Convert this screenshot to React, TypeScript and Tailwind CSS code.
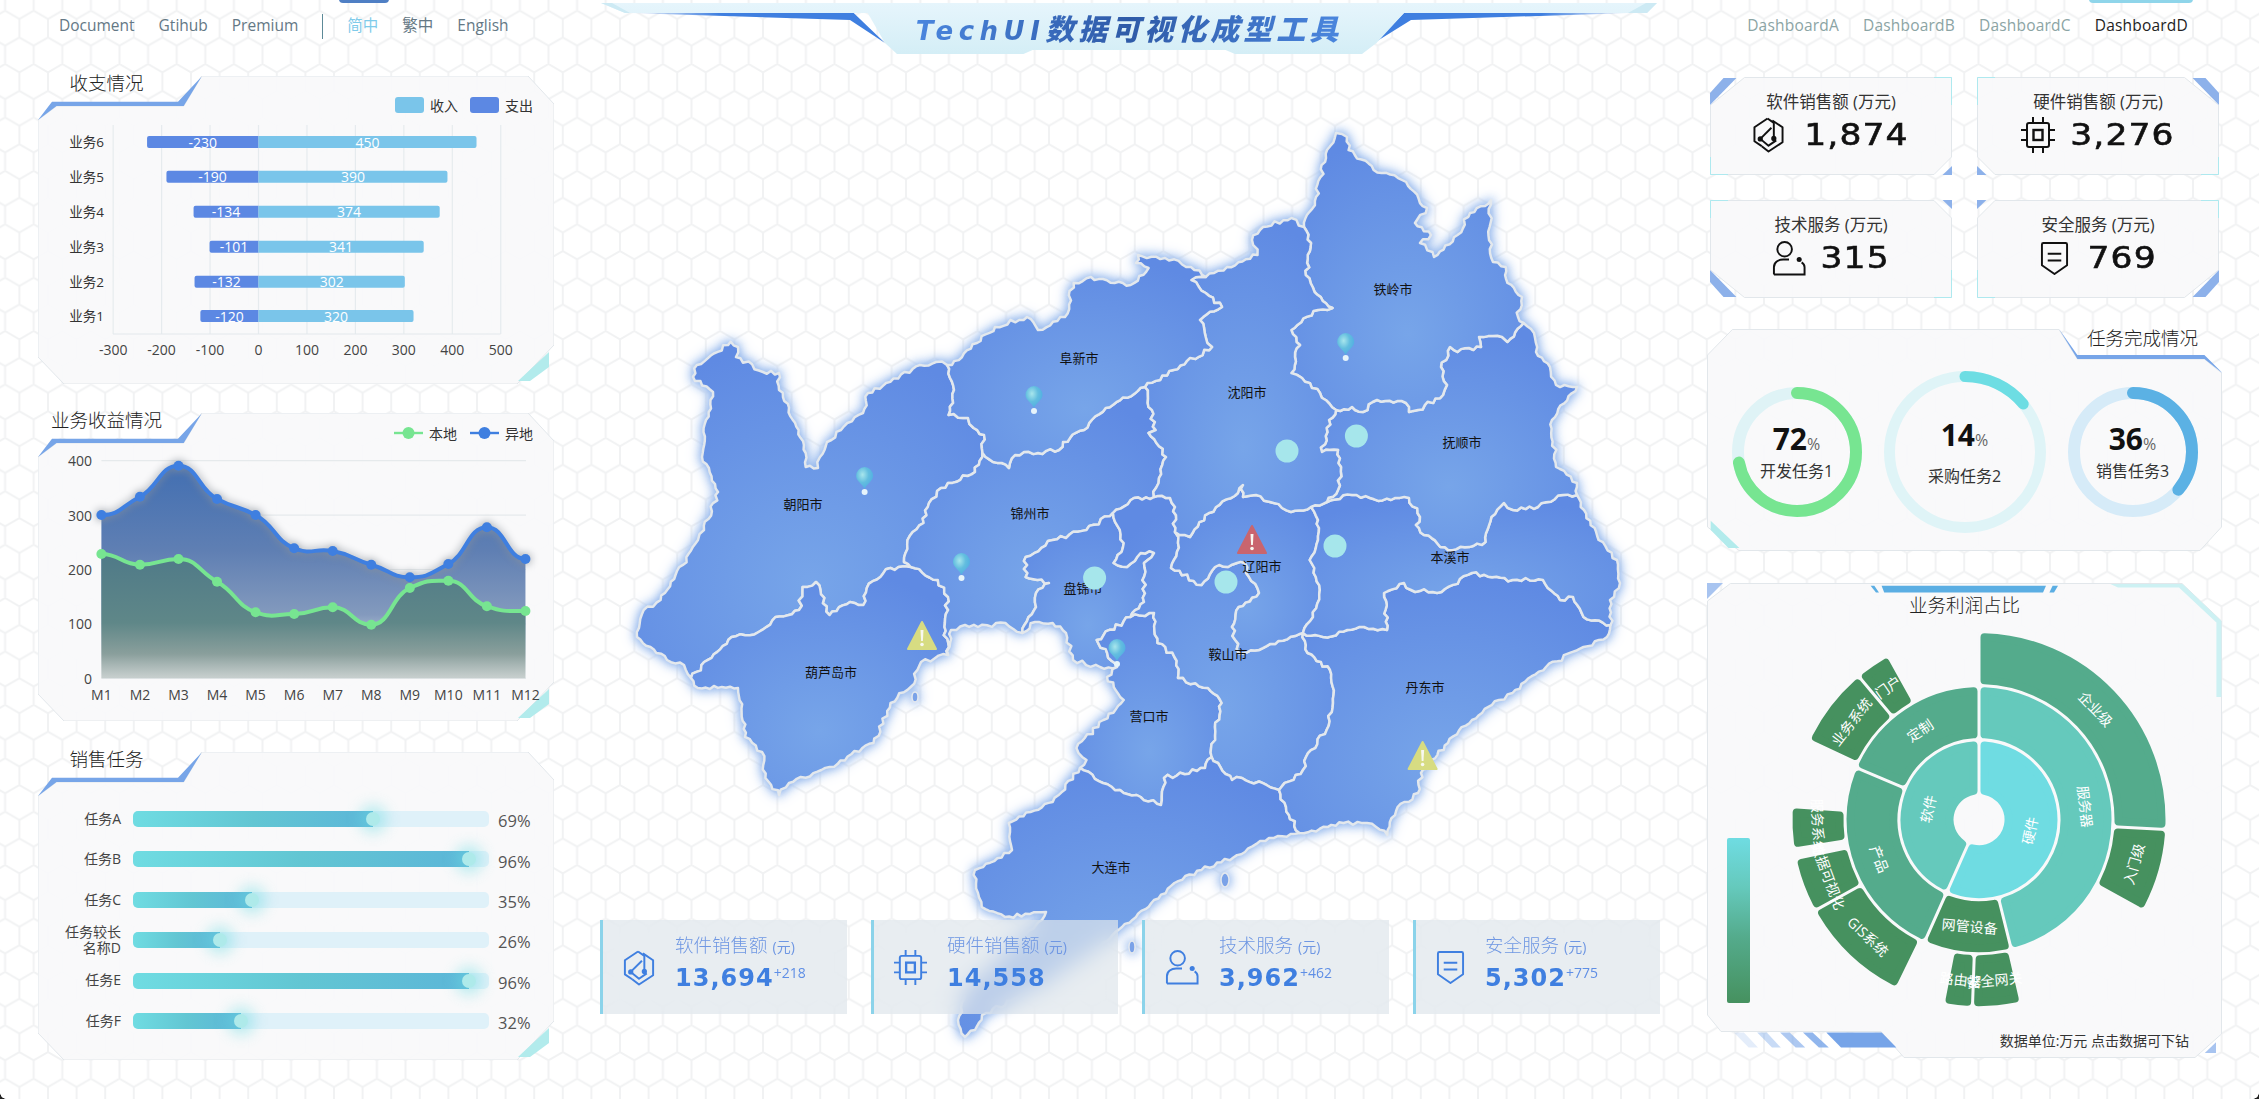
import React from "react";

type P = [number, number];
const rev = (a: P[]) => [...a].reverse();

/* ---------- map geometry, in page coordinates ---------- */
const chaoFuxin: P[] = [[947,365],[954,390],[948.6,415],[968,418],[973.6,428],[984,435],[982.5,453]];
const chaoJin: P[] = [[982.5,453],[975,472],[941,488],[929,503],[923.6,523],[907.5,540],[904,562],[910.7,567]];
const chaoHulu: P[] = [[691,678],[731.6,637],[758.6,632],[775.5,617],[799,610],[802.6,587],[816,582],[829.6,615],[850,602],[863.4,605],[866.8,588],[890.5,568],[910.7,567]];
const chaoOuter: P[] = [[947,365],[936,362],[920,365],[886,383],[868,393],[863,413],[841,430],[827,442],[820,457],[818,468],[805.7,467],[805.7,453],[798.6,430],[779,390],[779,373],[763,372],[736,357],[738,347],[730.7,341.7],[696.8,365],[693,376.7],[713,392],[706,420],[702,457],[718,492],[704,530],[698,540],[660.6,600],[643.7,610],[637,637],[667,660],[684,665],[691,678]];
const huluJin: P[] = [[910.7,567],[937.8,580],[948,597],[944.5,627],[948,655]];
const huluCoast: P[] = [[948,655],[921,662],[910.7,687],[890.5,703],[873.5,743],[829.6,767],[789,783],[779,795],[765.4,778],[762,752],[745,737],[738,688],[697.8,688],[691,678]];
const fuxinJin: P[] = [[982.5,453],[993,462],[1009,468],[1015,455],[1038,453],[1059,450],[1063,442],[1084,430],[1105.7,408],[1145,387]];
const jinShen: P[] = [[1145,387],[1155.7,430],[1148.6,433],[1166,457],[1159,478],[1154,497]];
const anJin: P[] = [[1154,497],[1134,498],[1113,513]];
const jinPan: P[] = [[1113,513],[1086.5,530],[1052.7,540],[1025.7,557],[1025.7,577],[1049,583],[1036,593],[1036,607],[1022.3,633]];
const jinCoast: P[] = [[1022.3,633],[1005.4,623],[978,627],[965,625],[951,630],[948,655]];
const anPan: P[] = [[1113,513],[1123.7,543],[1113.6,563],[1127,567],[1140.6,553],[1154,553],[1144,563],[1144,602],[1130.5,617]];
const panYing: P[] = [[1130.5,617],[1096.7,640],[1117,667]];
const panCoast: P[] = [[1117,667],[1100,667],[1073,660],[1066,633],[1052.7,623],[1035,622],[1022.3,633]];
const anYing: P[] = [[1130.5,617],[1154,613],[1157.5,643],[1174.4,657],[1178,678],[1208,688],[1221.7,703],[1215,727],[1211.6,757]];
const yingDa: P[] = [[1211.6,757],[1205,768],[1164,778],[1161,805],[1140.6,797],[1123.7,793],[1103,783],[1080,768]];
const yingCoast: P[] = [[1080,768],[1086.5,760],[1076.4,748],[1103.4,720],[1123.7,700],[1107,677],[1117,667]];
const shenAn: P[] = [[1154,497],[1170,498],[1175,507],[1175,532]];
const shenLiao: P[] = [[1175,532],[1190,537],[1209,513],[1238,493],[1243,485],[1243,497],[1256,495],[1273.6,503],[1291,512],[1311,507]];
const liaoBen: P[] = [[1311,507],[1318,520],[1318,540],[1309.7,560],[1319.8,590],[1313,617],[1303,633]];
const anLiao: P[] = [[1175,532],[1178,543],[1171,568],[1201.5,585],[1215,567],[1245,563],[1249,577],[1259,593],[1238.7,607],[1232,627],[1238.7,653],[1259,650],[1303,633]];
const anDan: P[] = [[1303,633],[1307.6,653],[1330,670],[1333,703],[1326.6,730],[1306,757],[1303,770],[1279,790]];
const anDa: P[] = [[1279,790],[1242,778],[1232,780],[1211.6,757]];
const daDan: P[] = [[1279,790],[1286,807],[1299.5,833]];
const daCoast: P[] = [[1299.5,833],[1269,838],[1245,852],[1201.5,870],[1174.4,883],[1154,900],[1122,927],[1100,945],[1040,985],[986,1013],[975,1030],[965,1037],[958,1020],[965,990],[1000,960],[1042,920],[1046,912],[1005,917],[981.7,907],[978,893],[975,870],[1012,850],[1008.8,823],[1052.7,802],[1080,768]];
const danCoast: P[] = [[1299.5,833],[1343.5,823],[1367,823],[1387.4,835],[1397.6,807],[1418,793],[1421,773],[1448,743],[1472,720],[1499,700],[1512.5,693],[1546,667],[1583.5,647],[1607,637],[1610.5,625]];
const danBen: P[] = [[1303,633],[1323,637],[1364,627],[1387,630],[1384,593],[1404,583],[1411,590],[1441.5,592],[1472,573],[1512.5,580],[1543,580],[1560,600],[1573,597],[1583.5,617],[1610.5,625]];
const benTop: P[] = [[1311,507],[1327,502]];
const fuBen: P[] = [[1327,502],[1352,495],[1370,498],[1391,500],[1409,498],[1420,517],[1416,525],[1424,535],[1448,550],[1485.5,542],[1491.4,517],[1504,503],[1513,510],[1538,507],[1563,495],[1577,495]];
const benOuter: P[] = [[1577,495],[1584,510],[1598.6,540],[1617,560],[1620,583],[1610,600],[1610.5,625]];
const tieFu: P[] = [[1336,410],[1352,407],[1363,412],[1377,400],[1406,403],[1409,412],[1418,410],[1443,395],[1447,385],[1441,367],[1450,347],[1457.5,352],[1481,347],[1479,337],[1502,337],[1507.5,342],[1523.6,323]];
const fuOuter: P[] = [[1523.6,323],[1534,333],[1536,352],[1550,367],[1556,385],[1577,387],[1552,420],[1556,467],[1577,483],[1577,495]];
const shenFu: P[] = [[1327,502],[1338,490],[1341,467],[1338,450],[1322,452],[1329,420],[1336,410]];
const tieOuter: P[] = [[1304,227],[1316,197],[1327,150],[1336,133],[1347,137],[1348.6,150],[1373.6,170],[1402,180],[1427,208],[1415,223],[1431,235],[1420,243],[1432.5,252],[1434,257],[1457.5,235],[1470,213],[1491,200],[1489.6,227],[1493,262],[1505.7,267],[1507.5,283],[1522,297],[1518,317],[1523.6,323]];
const tieShen: P[] = [[1336,410],[1320,393],[1302,378],[1291.4,373],[1295,357],[1300,345],[1291.4,330],[1318,310],[1332.5,308],[1314.6,292],[1305.7,275],[1311,243],[1304,227]];
const shenOuter: P[] = [[1205.7,277],[1227,267],[1257.5,255],[1252,240],[1263,227],[1291.4,218],[1304,227]];
const fuShen: P[] = [[1145,387],[1173.6,370],[1212,347],[1205.7,337],[1200,320],[1222,307],[1205.7,293],[1191.4,280],[1205.7,277]];
const fuxOuter: P[] = [[947,365],[952,365],[977,343],[995,327],[1027,317],[1038,330],[1065,317],[1073.6,283],[1091,277],[1114.6,283],[1130.7,285],[1148.6,268],[1136,263],[1138,255],[1165,258],[1191,267],[1205.7,277]];

const cities: P[][] = [
  [...chaoOuter, ...chaoHulu, ...rev(chaoJin), ...rev(chaoFuxin)],
  [...chaoHulu, ...huluJin, ...huluCoast],
  [...fuxinJin, ...jinShen, ...anJin, ...jinPan, ...jinCoast, ...rev(huluJin), ...rev(chaoJin)],
  [...anPan, ...panYing, ...panCoast, ...rev(jinPan)],
  [...anYing, ...yingDa, ...yingCoast, ...rev(panYing)],
  [...rev(anJin), ...shenAn, ...anLiao, ...anDan, ...anDa, ...rev(anYing), ...rev(anPan)],
  [...shenLiao, ...liaoBen, ...rev(anLiao)],
  [...rev(yingDa), ...rev(anDa), ...daDan, ...daCoast],
  [...anDan, ...daDan, ...danCoast, ...rev(danBen)],
  [...benTop, ...fuBen, ...benOuter, ...rev(danBen), ...rev(liaoBen)],
  [...tieFu, ...fuOuter, ...rev(fuBen), ...shenFu],
  [...tieOuter, ...rev(tieFu), ...tieShen],
  [...shenOuter, ...rev(tieShen), ...rev(shenFu), ...rev(benTop), ...rev(shenLiao), ...rev(shenAn), ...rev(jinShen), ...fuShen],
  [...fuxOuter, ...rev(fuShen), ...rev(fuxinJin), ...chaoFuxin.slice().reverse()],
];

function jitterSeg(a: P, b: P): P[] {
  const swap = a[0] > b[0] || (a[0] === b[0] && a[1] > b[1]);
  const [p, q] = swap ? [b, a] : [a, b];
  const len = Math.hypot(q[0] - p[0], q[1] - p[1]);
  const n = Math.floor(len / 4);
  let s = Math.abs(Math.round(p[0] * 13 + p[1] * 7 + q[0] * 3 + q[1] * 11)) + 17;
  const rnd = () => {
    s = (s * 16807) % 2147483647;
    return (s % 1000) / 1000 - 0.5;
  };
  const out: P[] = [];
  for (let i = 1; i < n; i++) {
    const t = i / n;
    const k = rnd() * 4.4;
    out.push([p[0] + (q[0] - p[0]) * t - ((q[1] - p[1]) / len) * k, p[1] + (q[1] - p[1]) * t + ((q[0] - p[0]) / len) * k]);
  }
  return swap ? out.reverse() : out;
}
function cityPath(pts: P[]) {
  let d = "";
  pts.forEach((pt, i) => {
    const nx = pts[(i + 1) % pts.length];
    d += (i === 0 ? "M" : "L") + pt[0].toFixed(1) + " " + pt[1].toFixed(1);
    if (nx[0] === pt[0] && nx[1] === pt[1]) return;
    jitterSeg(pt, nx).forEach((j) => (d += "L" + j[0].toFixed(1) + " " + j[1].toFixed(1)));
  });
  return d + "Z";
}

const mapLabels: [string, number, number][] = [
  ["朝阳市", 803, 504], ["阜新市", 1079, 358], ["锦州市", 1030, 513], ["沈阳市", 1247, 392], ["铁岭市", 1393, 289],
  ["抚顺市", 1462, 442], ["本溪市", 1450, 557], ["辽阳市", 1262, 566], ["盘锦市", 1083, 588], ["鞍山市", 1228, 654],
  ["葫芦岛市", 831, 672], ["营口市", 1149, 716], ["丹东市", 1425, 687], ["大连市", 1111, 867],
];

function Pin({ x, y }: { x: number; y: number }) {
  return (
    <g>
      <path d={`M${x - 8.5} ${y} A8.5 9 0 1 1 ${x + 8.5} ${y} C${x + 8.5} ${y + 5} ${x + 2} ${y + 8} ${x} ${y + 13} C${x - 2} ${y + 8} ${x - 8.5} ${y + 5} ${x - 8.5} ${y}Z`} fill="url(#pinG)" />
      <circle cx={x} cy={y + 16} r={3} fill="#e6f4fb" />
    </g>
  );
}
function Warn({ x, y, c }: { x: number; y: number; c: string }) {
  return (
    <g>
      <path d={`M${x} ${y - 14} L${x + 14} ${y + 13} H${x - 14}Z`} fill={c} stroke={c} strokeWidth={2} strokeLinejoin="round" />
      <path d={`M${x - 1.5} ${y - 6} h3 l-.6 11 h-1.8Z`} fill="#f8f8f0" />
      <circle cx={x} cy={y + 8.5} r={1.8} fill="#f8f8f0" />
    </g>
  );
}

function MapLayer() {
  return (
    <svg className="absolute inset-0" width={2259} height={1099} viewBox="0 0 2259 1099">
      <defs>
        <radialGradient id="cityG" cx="50%" cy="72%" r="72%">
          <stop offset="0%" stopColor="#77a5e9" />
          <stop offset="100%" stopColor="#5f8ae3" />
        </radialGradient>
        <radialGradient id="pinG" cx="38%" cy="35%" r="65%">
          <stop offset="0%" stopColor="#a8e6ec" />
          <stop offset="55%" stopColor="#63bedf" />
          <stop offset="100%" stopColor="#52aee2" />
        </radialGradient>
      </defs>
      <g className="[filter:drop-shadow(0_0_5px_#8fb4ec)_drop-shadow(0_0_6px_#b4cdf2)]">
        {cities.map((c, i) => (
          <path key={i} d={cityPath(c)} fill="url(#cityG)" stroke="#e3e8ed" strokeWidth={2.5} strokeLinejoin="round" />
        ))}
        <ellipse cx={1225} cy={880} rx={4} ry={7} fill="#7aa2e8" stroke="#e5e9ee" strokeWidth={1.5} />
        <ellipse cx={915} cy={697} rx={3} ry={5} fill="#7aa2e8" stroke="#e5e9ee" strokeWidth={1.5} />
        <ellipse cx={1132} cy={947} rx={3} ry={6} fill="#7aa2e8" stroke="#e5e9ee" strokeWidth={1.5} />
      </g>
      {mapLabels.map(([t, x, y]) => (
        <text key={t} x={x} y={y} textAnchor="middle" dominantBaseline="central" fontSize={13} fill="#111">{t}</text>
      ))}
      <Pin x={864.6} y={476} />
      <Pin x={1034} y={395} />
      <Pin x={1345.7} y={342} />
      <Pin x={961.5} y={562} />
      <Pin x={1117} y={648} />
      {[[1287, 451], [1356.4, 436], [1094.6, 578], [1226, 582], [1335, 546]].map(([x, y]) => (
        <circle key={x} cx={x} cy={y} r={11.5} fill="#a6e6eb" />
      ))}
      <Warn x={1252} y={540} c="#c9656e" />
      <Warn x={922} y={636} c="#d7dc82" />
      <Warn x={1422.6} y={756} c="#d7dc82" />
    </svg>
  );
}

/* ---------- icons ---------- */
function IconSoft({ className }: { className: string }) {
  return (
    <svg className={className} viewBox="0 0 32 37" fill="none" stroke="currentColor" strokeWidth={2} strokeLinejoin="round">
      <path d="M15 1.5 L1.5 10.5 V25 L9 30" />
      <path d="M9 30 L16 35.5 L30.5 26 V10.5 L20 3.5" />
      <path d="M15 1.5 L21.5 6 V21" />
      <path d="M7.5 22.5 L19 11" />
      <path d="M7.5 22.5 L16 29.5 L24 24" />
      <circle cx={7.5} cy={22.5} r={1.7} fill="currentColor" />
      <circle cx={21.5} cy={22} r={1.7} fill="currentColor" />
    </svg>
  );
}
function IconChip({ className }: { className: string }) {
  return (
    <svg className={className} viewBox="0 0 34 36" fill="none" stroke="currentColor" strokeWidth={2}>
      <rect x={6} y={6} width={22} height={24} rx={2} />
      <rect x={12.5} y={13} width={9} height={10} strokeWidth={2.4} />
      <path d="M0 13 H6 M0 23 H6 M28 13 H34 M28 23 H34 M12 0 V6 M22 0 V6 M12 30 V36 M22 30 V36" />
    </svg>
  );
}
function IconUser({ className }: { className: string }) {
  return (
    <svg className={className} viewBox="0 0 34 36" fill="none" stroke="currentColor" strokeWidth={2}>
      <circle cx={12.5} cy={8.5} r={7.5} />
      <path d="M1.5 34.5 V27 C1.5 22 6 19 11 19 H17 M1.5 34.5 H33 V27 C33 24.5 31.5 23 30 22" />
      <circle cx={27.5} cy={19} r={2.6} fill="currentColor" stroke="none" />
    </svg>
  );
}
function IconShield({ className }: { className: string }) {
  return (
    <svg className={className} viewBox="0 0 30 36" fill="none" stroke="currentColor" strokeWidth={2} strokeLinejoin="round">
      <path d="M2 3.5 Q2 2 3.5 2 H26.5 Q28 2 28 3.5 V25 L15 34 L2 25 Z" />
      <path d="M8 13 H22 M8 20 H22" />
    </svg>
  );
}

/* ---------- frames ---------- */
const FILL = "#f9f9fa";
const LINE = "#e2e7eb";
function ChartFrame() {
  return (
    <svg className="absolute inset-0" width={516} height={308} viewBox="0 0 516 308">
      <polygon points="0,44 18.6,30 145.7,30 163.7,0 490,0 516,28 516,269 479,308 26,308 0,281" fill={FILL} fillOpacity={0.93} stroke={LINE} />
      <polygon points="0,44 14,25.7 140,25.7 163.7,0.5 145.7,30 18.6,30" fill="#77a5e8" />
      <polygon points="511,276 511,291 492,305 480,305" fill="#b2ebec" />
    </svg>
  );
}
function ChartTitle({ children }: { children: React.ReactNode }) {
  return <div className="relative -mt-[5px] h-[24px] w-[137px] text-center text-[18.5px] font-light leading-[24px] text-[#222]">{children}</div>;
}

function CardFrame({ flip }: { flip: string }) {
  return (
    <svg className={`absolute inset-0 ${flip}`} width={242} height={98} viewBox="0 0 242 98">
      <polygon points="34.5,0.5 241.5,0.5 241.5,80 224,97.5 0.5,97.5 0.5,28" fill={FILL} fillOpacity={0.93} stroke={LINE} />
      <path d="M224 .5 H241.5 V28" fill="none" stroke="#aee9ef" />
      <path d="M.5 80 V97.5 H18" fill="none" stroke="#aee9ef" />
      <polygon points="13.5,1 26.4,1 0,28 0,16" fill="#8db1ea" />
      <polygon points="242,89 242,98 232.5,98" fill="#8db1ea" />
    </svg>
  );
}

/* ---------- charts ---------- */
const barRows: [string, number, number, number][] = [
  ["业务6", 142, -230, 450], ["业务5", 176.7, -190, 390], ["业务4", 211.7, -134, 374],
  ["业务3", 246.7, -101, 341], ["业务2", 281.7, -132, 302], ["业务1", 316, -120, 320],
];
function BarChart() {
  const X = (v: number) => 258.5 + v * 0.4845;
  const ticks = [-300, -200, -100, 0, 100, 200, 300, 400, 500];
  return (
    <svg className="relative overflow-visible" width={516} height={289} viewBox="38 95 516 289">
      <rect x={395} y={97} width={29} height={16} rx={3} fill="#7ac5ea" />
      <text x={430} y={105} fontSize={14} fill="#333" dominantBaseline="central">收入</text>
      <rect x={470} y={97} width={29} height={16} rx={3} fill="#5c88e3" />
      <text x={505} y={105} fontSize={14} fill="#333" dominantBaseline="central">支出</text>
      {ticks.map((t) => (
        <g key={t}>
          <line x1={X(t)} x2={X(t)} y1={125} y2={334} stroke="#e6ebee" strokeWidth={1.2} />
          <text x={X(t)} y={349} fontSize={14} fill="#444" textAnchor="middle" dominantBaseline="central">{t}</text>
        </g>
      ))}
      <line x1={113} x2={500.6} y1={334} y2={334} stroke="#e3e8ec" />
      {barRows.map(([n, y, neg, pos]) => (
        <g key={n}>
          <text x={104} y={y} fontSize={13.5} fill="#333" textAnchor="end" dominantBaseline="central">{n}</text>
          <path d={`M${X(0)} ${y - 6} H${X(neg) + 2} a2 2 0 0 0 -2 2 v8 a2 2 0 0 0 2 2 H${X(0)}Z`} fill="#5c88e3" />
          <path d={`M${X(0)} ${y - 6} H${X(pos) - 2} a2 2 0 0 1 2 2 v8 a2 2 0 0 1 -2 2 H${X(0)}Z`} fill="#7ac5ea" />
          <text x={(X(0) + X(neg)) / 2} y={y} fontSize={14} fill="#fff" textAnchor="middle" dominantBaseline="central">{neg}</text>
          <text x={(X(0) + X(pos)) / 2} y={y} fontSize={14} fill="#fff" textAnchor="middle" dominantBaseline="central">{pos}</text>
        </g>
      ))}
    </svg>
  );
}

const xs = Array.from({ length: 12 }, (_, i) => 101.4 + i * 38.55);
const blueY = [516, 497.7, 466.7, 500, 516, 549.3, 552, 565.7, 578.3, 565, 528.3, 560];
const greenY = [555, 565.7, 560, 582.7, 613.3, 615, 608.3, 625.7, 589, 581.7, 607.3, 612];
function smooth(ys: number[]) {
  let d = `M${xs[0]} ${ys[0]}`;
  for (let i = 0; i < ys.length - 1; i++) {
    const y0 = ys[Math.max(i - 1, 0)], y1 = ys[i], y2 = ys[i + 1], y3 = ys[Math.min(i + 2, ys.length - 1)];
    const flat1 = (y1 - y0) * (y2 - y1) <= 0;
    const flat2 = (y2 - y1) * (y3 - y2) <= 0;
    const c1 = flat1 ? y1 : y1 + (y2 - y0) * 0.2;
    const c2 = flat2 ? y2 : y2 - (y3 - y1) * 0.2;
    d += `C${xs[i] + 19} ${c1} ${xs[i + 1] - 19} ${c2} ${xs[i + 1]} ${y2}`;
  }
  return d;
}
function AreaChart() {
  const base = 679.3;
  return (
    <svg className="relative overflow-visible" width={516} height={288} viewBox="38 433 516 288">
      <defs>
        <linearGradient id="blueA" gradientUnits="userSpaceOnUse" x1={0} x2={0} y1={466} y2={680}>
          <stop offset="0%" stopColor="#426fb2" />
          <stop offset="40%" stopColor="#5f7fb3" />
          <stop offset="70%" stopColor="#8198bc" stopOpacity={0.98} />
          <stop offset="100%" stopColor="#aebdd2" stopOpacity={0.15} />
        </linearGradient>
        <linearGradient id="greenA" gradientUnits="userSpaceOnUse" x1={0} x2={0} y1={555} y2={680}>
          <stop offset="0%" stopColor="#4f7a88" />
          <stop offset="55%" stopColor="#5f8788" />
          <stop offset="80%" stopColor="#8a9f9c" />
          <stop offset="100%" stopColor="#bec7c4" stopOpacity={0.75} />
        </linearGradient>
      </defs>
      <line x1={394} x2={423} y1={434} y2={434} stroke="#77e591" strokeWidth={2.4} />
      <circle cx={408.5} cy={434} r={6} fill="#77e591" />
      <text x={429} y={434} fontSize={14} fill="#333" dominantBaseline="central">本地</text>
      <line x1={470} x2={499} y1={434} y2={434} stroke="#3f7fe0" strokeWidth={2.4} />
      <circle cx={484.5} cy={434} r={6} fill="#3f7fe0" />
      <text x={505} y={434} fontSize={14} fill="#333" dominantBaseline="central">异地</text>
      {[0, 100, 200, 300, 400].map((v) => {
        const y = base - v * 0.544;
        return (
          <g key={v}>
            <line x1={101.4} x2={526} y1={y} y2={y} stroke="#e6eaec" strokeWidth={1.2} />
            <text x={92} y={y} fontSize={14} fill="#444" textAnchor="end" dominantBaseline="central">{v}</text>
          </g>
        );
      })}
      {xs.map((x, i) => (
        <text key={x} x={x} y={695.5} fontSize={14} fill="#444" textAnchor="middle" dominantBaseline="central">{`M${i + 1}`}</text>
      ))}
      <path d={`${smooth(blueY)}L${xs[11]} ${base}L${xs[0]} ${base}Z`} fill="url(#blueA)" />
      <path d={`${smooth(greenY)}L${xs[11]} ${base}L${xs[0]} ${base}Z`} fill="url(#greenA)" />
      <g className="[filter:drop-shadow(0_0_4px_#8b929a)]">
        <path d={smooth(blueY)} fill="none" stroke="#3f7fe0" strokeWidth={4} />
        {xs.map((x, i) => <circle key={x} cx={x} cy={blueY[i]} r={5} fill="#3f7fe0" />)}
      </g>
      <path d={smooth(greenY)} fill="none" stroke="#77e591" strokeWidth={4} />
      {xs.map((x, i) => <circle key={x} cx={x} cy={greenY[i]} r={5} fill="#77e591" />)}
    </svg>
  );
}

const tasks: { name: React.ReactNode; pct: number; two?: boolean }[] = [
  { name: "任务A", pct: 69 }, { name: "任务B", pct: 96 }, { name: "任务C", pct: 35 },
  { name: <>任务较长<br />名称D</>, pct: 26 }, { name: "任务E", pct: 96 }, { name: "任务F", pct: 32 },
];
function TaskBars() {
  return (
    <div className="relative mt-[40px] flex flex-col gap-[24.4px]">
      {tasks.map((t, i) => (
        <div key={i} className="flex h-[16px] items-center">
          <div className="w-[83px] shrink-0 text-right text-[14px] leading-[16.5px] text-[#444]">{t.name}</div>
          <div className="relative ml-[12px] h-[16px] w-[356px] rounded-[5px] bg-[#dff1f9]">
            <div className="h-full rounded-l-[5px] bg-gradient-to-r from-[#6fdce2] via-[#62c6d3] to-[#5cb6d8]" style={{ width: `calc(${t.pct}% - 6px)` }} />
            <div className="absolute top-[1px] h-[14px] w-[14px] -translate-x-1/2 rounded-full bg-[#aeeaea] shadow-[0_0_14px_7px_rgba(111,220,226,0.45)]" style={{ left: `calc(${t.pct}% - 6px)` }} />
          </div>
          <div className="ml-[9px] mt-[5px] text-[16.5px] leading-none text-[#555]">{t.pct}%</div>
        </div>
      ))}
    </div>
  );
}

function Ring({ size, r, sw, pct, color, track, value, label, gap }: { size: number; r: number; sw: number; pct: number; color: string; track: string; value: number; label: string; gap: string }) {
  const c = 2 * Math.PI * r;
  return (
    <div className="relative flex items-center justify-center" style={{ width: size, height: size }}>
      <svg className="absolute inset-0 -rotate-90" width={size} height={size} viewBox={`0 0 ${size} ${size}`}>
        <circle cx={size / 2} cy={size / 2} r={r} fill="none" stroke={track} strokeWidth={sw} />
        <circle cx={size / 2} cy={size / 2} r={r} fill="none" stroke={color} strokeWidth={sw} strokeLinecap="round" strokeDasharray={`${(c * pct) / 100} ${c}`} />
      </svg>
      <div className={`relative flex flex-col items-center ${gap}`}>
        <div className="flex h-[34px] items-baseline leading-[34px]">
          <span className="text-[30px] font-bold text-[#111]">{value}</span>
          <span className="text-[16px] text-[#666]">%</span>
        </div>
        <div className="h-[22px] text-[16px] leading-[22px] text-[#333]">{label}</div>
      </div>
    </div>
  );
}

/* ---------- sunburst ---------- */
const CX = 1979, CY = 819.7;
const pol = (a: number, r: number): P => {
  const t = (a * Math.PI) / 180;
  return [CX + r * Math.sin(t), CY - r * Math.cos(t)];
};
function sector(r0: number, r1: number, a0: number, a1: number) {
  const pad = 5.5;
  const ri = r0 + pad, ro = r1 - pad;
  const dO = ((pad / ro) * 180) / Math.PI, dI = ((pad / ri) * 180) / Math.PI;
  const A = pol(a0 + dO, ro), B = pol(a1 - dO, ro), C = pol(a1 - dI, ri), D = pol(a0 + dI, ri);
  const large = a1 - a0 > 180 ? 1 : 0;
  return `M${A[0]} ${A[1]}A${ro} ${ro} 0 ${large} 1 ${B[0]} ${B[1]}L${C[0]} ${C[1]}A${ri} ${ri} 0 ${large} 0 ${D[0]} ${D[1]}Z`;
}
const sectors: [string, number, number, number, number, string][] = [
  ["硬件", 24, 80, 0, 204, "#6fdce2"],
  ["软件", 24, 80, 204, 360, "#65c9bc"],
  ["服务器", 80, 134, 0, 166, "#65c9bc"],
  ["网管设备", 80, 134, 166, 204, "#46915f"],
  ["产品", 80, 134, 204, 293, "#54ab8c"],
  ["定制", 80, 134, 293, 360, "#54ab8c"],
  ["企业级", 134, 188, 0, 93, "#54ab8c"],
  ["入门级", 134, 188, 93, 119, "#46915f"],
  ["安全网关", 134, 188, 167, 182, "#46915f"],
  ["路由器", 134, 188, 182, 191, "#46915f"],
  ["GIS系统", 134, 188, 206, 241, "#46915f"],
  ["数据可视化", 134, 188, 241, 258, "#46915f"],
  ["服务系统", 134, 188, 261, 274, "#46915f"],
  ["业务系统", 134, 188, 295, 320, "#46915f"],
  ["门户", 134, 188, 320, 331, "#46915f"],
];
function Sunburst() {
  return (
    <svg className="relative" width={515} height={414} viewBox="1707 617 515 414">
      <defs>
        <linearGradient id="legendG" x1="0" x2="0" y1="0" y2="1">
          <stop offset="0%" stopColor="#6fdce2" />
          <stop offset="30%" stopColor="#65c9bc" />
          <stop offset="60%" stopColor="#54ab8c" />
          <stop offset="100%" stopColor="#46915f" />
        </linearGradient>
      </defs>
      <rect x={1727} y={838} width={23} height={165} rx={2} fill="url(#legendG)" />
      {sectors.map(([n, r0, r1, a0, a1, c]) => (
        <path key={n} d={sector(r0, r1, a0, a1)} fill={c} stroke={c} strokeWidth={8} strokeLinejoin="round" />
      ))}
      {sectors.map(([n, r0, r1, a0, a1]) => {
        const m = (a0 + a1) / 2;
        const [x, y] = pol(m, (r0 + r1) / 2);
        const rot = m > 90 && m < 270 ? m - 180 : m > 270 ? m - 360 : m;
        return (
          <text key={n} x={x} y={y} fontSize={14} fill="#fff" textAnchor="middle" dominantBaseline="central" transform={`rotate(${rot} ${x} ${y})`}>{n}</text>
        );
      })}
    </svg>
  );
}

/* ---------- small pieces ---------- */
const topCards = [
  { t: "软件销售额 (万元)", v: "1,874", I: IconSoft, iw: "h-[36px] w-[31px]", gap: "gap-[20px]", flip: "", m: "mx-[7px]" },
  { t: "硬件销售额 (万元)", v: "3,276", I: IconChip, iw: "h-[36px] w-[34px]", gap: "gap-[15px]", flip: "-scale-x-100", m: "mx-[7px]" },
  { t: "技术服务 (万元)", v: "315", I: IconUser, iw: "h-[35px] w-[34px]", gap: "gap-[15px]", flip: "-scale-y-100", m: "mx-[4px]" },
  { t: "安全服务 (万元)", v: "769", I: IconShield, iw: "h-[35px] w-[29px]", gap: "gap-[19px]", flip: "-scale-100", m: "mx-[4px]" },
];
const bottomCards = [
  { t: "软件销售额", v: "13,694", s: "+218", I: IconSoft, iw: "h-[36px] w-[32px]" },
  { t: "硬件销售额", v: "14,558", s: "", I: IconChip, iw: "h-[35px] w-[33px]" },
  { t: "技术服务", v: "3,962", s: "+462", I: IconUser, iw: "h-[35px] w-[34px]" },
  { t: "安全服务", v: "5,302", s: "+775", I: IconShield, iw: "h-[35px] w-[29px]" },
];

function Corner({ cls }: { cls: string }) {
  return <div className={`absolute h-[6px] w-[6px] ${cls}`} />;
}

export default function App() {
  return (
    <div className="relative h-[1099px] w-[2259px] overflow-hidden bg-white [font-family:'Open_Sans','Noto_Sans_CJK_SC',sans-serif]">
      <svg className="absolute inset-0" width={2259} height={1099}>
        <defs>
          <pattern id="hex" width={28.6} height={53.4} patternUnits="userSpaceOnUse" patternTransform="translate(19.4 10.7)">
            <path d="M0 8.3 V26.7 L14.3 35 L28.6 26.7 V8.3 L14.3 0 Z M14.3 35 V53.4" fill="none" stroke="#f1f2f3" strokeWidth={2} />
          </pattern>
        </defs>
        <rect width={2259} height={1099} fill="url(#hex)" />
      </svg>
      <MapLayer />

      {/* header */}
      <header className="relative flex h-[76px]">
        <nav className="flex h-[52px] w-[601px] items-center gap-[24px] pl-[59px] text-[15.5px] text-[#647885]">
          <span>Document</span>
          <span>Gtihub</span>
          <span>Premium</span>
          <span className="h-[25px] w-px bg-[#5d8a98]" />
          <span className="relative text-[#7fcbea]">
            简中
            <span className="absolute -top-[17px] -left-[8px] h-[6px] w-[50px] rounded-b-[4px] bg-[#4f7fc4]" />
          </span>
          <span>繁中</span>
          <span>English</span>
        </nav>
        <div className="relative flex h-[58px] w-[1056px] justify-center">
          <svg className="absolute inset-0" width={1056} height={58} viewBox="601 0 1056 58">
            <defs>
              <linearGradient id="wingL" x1="0" x2="1" y1="0" y2="0">
                <stop offset="0%" stopColor="#3f7fe0" stopOpacity={0} />
                <stop offset="35%" stopColor="#3f7fe0" />
              </linearGradient>
              <linearGradient id="wingR" x1="1" x2="0" y1="0" y2="0">
                <stop offset="0%" stopColor="#3f7fe0" stopOpacity={0} />
                <stop offset="35%" stopColor="#3f7fe0" />
              </linearGradient>
              <linearGradient id="capG" x1="0" x2="0" y1="0" y2="1">
                <stop offset="0%" stopColor="#e6f5fc" />
                <stop offset="100%" stopColor="#d4eef6" />
              </linearGradient>
            </defs>
            <polygon points="629,13 853.7,13 885,43 850,20" fill="url(#wingL)" />
            <polygon points="1632,13 1404,13 1374,43 1411,20" fill="url(#wingR)" />
            <polygon points="601,3 1657,3 1647,13 1404,13 1376.5,43 1362,54 1235,54 1225.6,50 1032.6,50 1023.5,54 897,54 885,43 867.7,13 625,13" fill="url(#capG)" />
            <polygon points="601,3 612,3 630,13 625,13" fill="#cdeaf4" />
            <polygon points="1657,3 1646,3 1628,13 1647,13" fill="#cdeaf4" />
          </svg>
          <h1 className="relative mt-[11px] h-[36px] bg-gradient-to-r from-[#4a86de] via-[#2f5ba8] to-[#4a86de] bg-clip-text text-[29px] font-black italic leading-[36px] tracking-[4px] text-transparent">
            <span className="tracking-[5.5px] [font-family:'DejaVu_Sans',sans-serif] text-[26px] font-bold">TechUI</span>数据可视化成型工具
          </h1>
        </div>
        <nav className="flex h-[52px] flex-1 items-center justify-end gap-[24px] pr-[71px] text-[15.5px] tracking-[0.2px] text-[#8ba4a4]">
          <span>DashboardA</span>
          <span>DashboardB</span>
          <span>DashboardC</span>
          <span className="relative text-[#222]">
            DashboardD
            <span className="absolute -top-[17px] -left-[6px] h-[6px] w-[104px] rounded-b-[4px] bg-[#8fd5ea]" />
          </span>
        </nav>
      </header>

      {/* body */}
      <main className="relative flex">
        <aside className="ml-[38px] flex w-[516px] shrink-0 flex-col">
          <section className="relative h-[308px]">
            <ChartFrame />
            <ChartTitle>收支情况</ChartTitle>
            <BarChart />
          </section>
          <section className="relative mt-[29px] h-[308px]">
            <ChartFrame />
            <ChartTitle>业务收益情况</ChartTitle>
            <AreaChart />
          </section>
          <section className="relative mt-[31px] h-[308px]">
            <ChartFrame />
            <ChartTitle>销售任务</ChartTitle>
            <TaskBars />
          </section>
        </aside>

        <div className="ml-[46px] mt-[844px] flex h-[94px] gap-[24px]">
          {bottomCards.map(({ t, v, s, I, iw }) => (
            <div key={t} className="flex h-[94px] w-[247px] items-start border-l-[3px] border-[#8bd3ea] bg-[#dee6eb]/70 pl-[20px] backdrop-blur-[10px]">
              <I className={`mt-[30px] shrink-0 text-[#3f7fe0] ${iw}`} />
              <div className="ml-[20px] pt-[12px]">
                <div className="flex h-[26px] items-baseline whitespace-nowrap text-[#6f97e3]">
                  <span className="text-[18.5px] font-light leading-[26px]">{t}</span>
                  <span className="ml-[5px] text-[14px]">(元)</span>
                </div>
                <div className="mt-[5px] flex items-start whitespace-nowrap text-[#3f7fe0]">
                  <span className="text-[24px] font-bold leading-[30px] tracking-[1px] [font-family:'DejaVu_Sans',sans-serif]">{v}</span>
                  <span className="mt-[1px] text-[14px] leading-[18px] text-[#5f8fe6]">{s}</span>
                </div>
              </div>
            </div>
          ))}
        </div>

        <aside className="ml-[47px] flex w-[515px] shrink-0 flex-col">
          <div className="mt-px grid grid-cols-[242px_242px] gap-x-[25px] gap-y-[25px] pl-[3px]">
            {topCards.map(({ t, v, I, iw, gap, flip, m }) => (
              <div key={t} className="relative h-[98px] w-[242px]">
                <CardFrame flip={flip} />
                <div className="relative flex flex-col items-center pt-[13px] text-[#111]">
                  <div className="h-[24px] text-[16.5px] leading-[24px] text-[#333]">{t}</div>
                  <div className={`mt-[3px] flex items-center ${gap}`}>
                    <I className={iw} />
                    <span className={`inline-block scale-x-[1.15] text-[30px] leading-[36px] tracking-[1px] [-webkit-text-stroke:0.6px_#111] [font-family:'DejaVu_Sans',sans-serif] ${m}`}>{v}</span>
                  </div>
                </div>
              </div>
            ))}
          </div>

          <section className="relative mt-[31px] h-[222px]">
            <svg className="absolute inset-0" width={515} height={222} viewBox="0 0 515 222">
              <polygon points="25.4,0.5 352,0.5 370.4,30 497.4,30 514.5,44 514.5,198 493,221.5 32,221.5 0.5,198 0.5,26" fill={FILL} fillOpacity={0.93} stroke={LINE} />
              <polygon points="352,0 370.4,26 497.4,26 515.4,44 497.4,30 370.4,30" fill="#77a5e8" />
              <polygon points="3.7,191.7 32.4,219 21.4,219 3.7,201" fill="#b2ebec" />
            </svg>
            <div className="relative -mt-[3px] flex h-[24px] justify-end pr-[24px] text-[18.5px] font-light leading-[24px] text-[#222]">任务完成情况</div>
            <div className="relative mx-auto mt-[21px] grid w-[504px] grid-cols-3 justify-items-center">
              <div className="flex h-[162px] items-center"><Ring size={130} r={59} sw={12} pct={72} color="#77e591" track="#dff3f6" value={72} label="开发任务1" gap="gap-[4px]" /></div>
              <div className="flex h-[162px] items-center"><Ring size={162} r={75.5} sw={11} pct={14} color="#6ddde3" track="#dff4f7" value={14} label="采购任务2" gap="gap-[13px]" /></div>
              <div className="flex h-[162px] items-center"><Ring size={130} r={59} sw={12} pct={36} color="#5bb1e4" track="#d6ebf8" value={36} label="销售任务3" gap="gap-[4px]" /></div>
            </div>
          </section>

          <section className="relative mt-[31.5px] h-[475px]">
            <svg className="absolute inset-0" width={515} height={475} viewBox="0 0 515 475">
              <polygon points="23.4,0.5 475,0.5 514.5,38 514.5,451 488,474.5 197,474.5 174,448.5 14,448.5 0.5,432 0.5,18" fill={FILL} fillOpacity={0.93} stroke={LINE} />
              <polygon points="0,0 16,0 0,16" fill="#a8c4f0" />
              <polygon points="403.4,1 475.4,1 514.4,38 514.4,114 509.4,114 509.4,39.5 472,4.5 411,4.5" fill="#cdf1f3" />
              <polygon points="174.6,2.7 339,2.7 336,9.5 177.2,9.5" fill="#5baee3" />
              <polygon points="163.6,2.7 167.3,2.7 172,9.5 169,9.5" fill="#5baee3" />
              <polygon points="345.6,2.7 351,2.7 347,9.5 342.4,9.5" fill="#5baee3" />
              <polygon points="119.3,449.5 174.7,449.5 189.4,464.5 134,464.5" fill="#76a4e8" />
              <polygon points="96,449.5 105.6,449.5 121.8,464.5 111.9,464.5" fill="#76a4e8" fillOpacity={0.8} />
              <polygon points="73.1,449.5 82.7,449.5 98.2,464.5 88.6,464.5" fill="#76a4e8" fillOpacity={0.6} />
              <polygon points="50.2,449.5 59.8,449.5 73.8,464.5 65,464.5" fill="#76a4e8" fillOpacity={0.4} />
              <polygon points="26.9,449.5 36.9,449.5 51,464.5 41.7,464.5" fill="#76a4e8" fillOpacity={0.2} />
              <polygon points="509,459.2 509,470 497.8,470" fill="#a8c4f0" />
            </svg>
            <div className="relative pt-[10px] text-center text-[18.5px] font-light leading-[24px] text-[#222]">业务利润占比</div>
            <Sunburst />
            <div className="relative h-[20px] pr-[33px] text-right text-[14px] leading-[20px] text-[#333]">数据单位:万元 点击数据可下钻</div>
          </section>
        </aside>
      </main>

      <Corner cls="bottom-0 left-0 bg-[radial-gradient(circle_at_100%_0,transparent_5.5px,#222_6px)]" />
      <Corner cls="bottom-0 right-0 bg-[radial-gradient(circle_at_0_0,transparent_5.5px,#222_6px)]" />
    </div>
  );
}
